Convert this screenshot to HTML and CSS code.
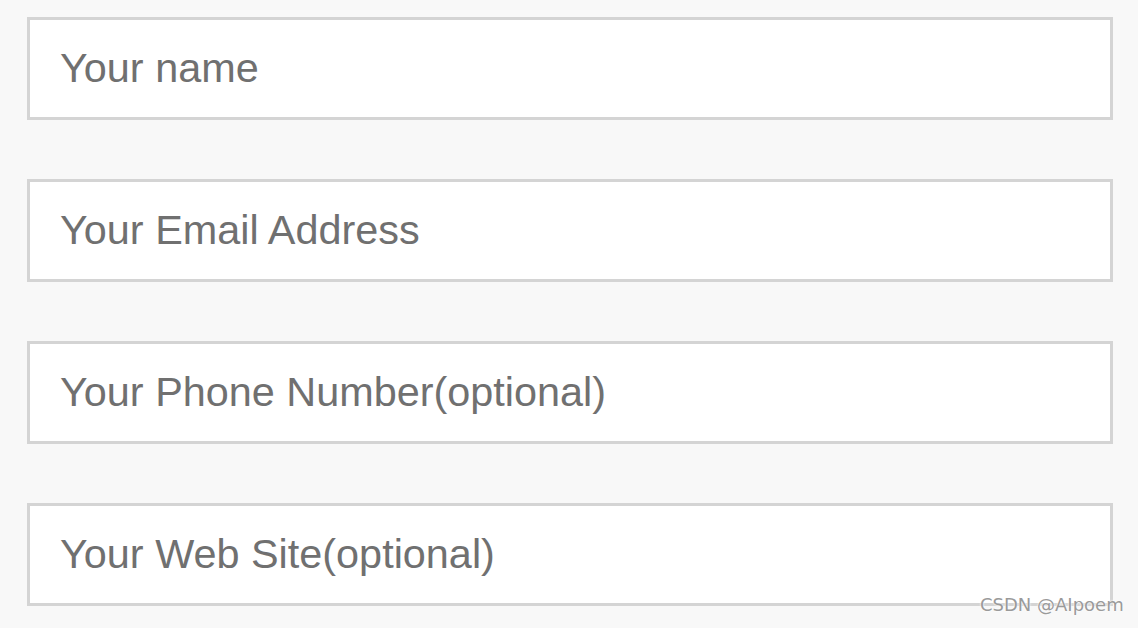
FILE: index.html
```html
<!DOCTYPE html>
<html lang="en">
<head>
<meta charset="utf-8">
<title>Contact form</title>
<link rel="stylesheet" href="styles.css">
</head>
<body>
<form class="form">
  <input class="field" type="text" placeholder="Your name">
  <input class="field" type="email" placeholder="Your Email Address">
  <input class="field" type="tel" placeholder="Your Phone Number(optional)">
  <input class="field" type="url" placeholder="Your Web Site(optional)">
</form>
<div class="watermark">CSDN @AIpoem</div>
</body>
</html>
```
FILE: styles.css
```css
html, body {
  margin: 0;
  height: 100%;
}
body {
  background: #f8f8f8;
  position: relative;
  overflow: hidden;
}
.form {
  display: flex;
  flex-direction: column;
  gap: 59px;
  padding: 17px 0 0 27px;
}
.field {
  box-sizing: border-box;
  width: 1086px;
  height: 103px;
  margin: 0;
  border: 3px solid #d4d4d4;
  background: #fff;
  padding: 0 30px;
  font-family: "Liberation Sans", Arial, sans-serif;
  font-size: 41.4px;
  color: #707070;
  outline: none;
}
.field::placeholder {
  color: #707070;
  opacity: 1;
}
.watermark {
  position: absolute;
  left: 980px;
  top: 594px;
  font-family: "DejaVu Sans", sans-serif;
  font-size: 18px;
  color: #9a9a9a;
  text-shadow: 0 0 2px #fff, 0 0 2px #fff;
}
```
